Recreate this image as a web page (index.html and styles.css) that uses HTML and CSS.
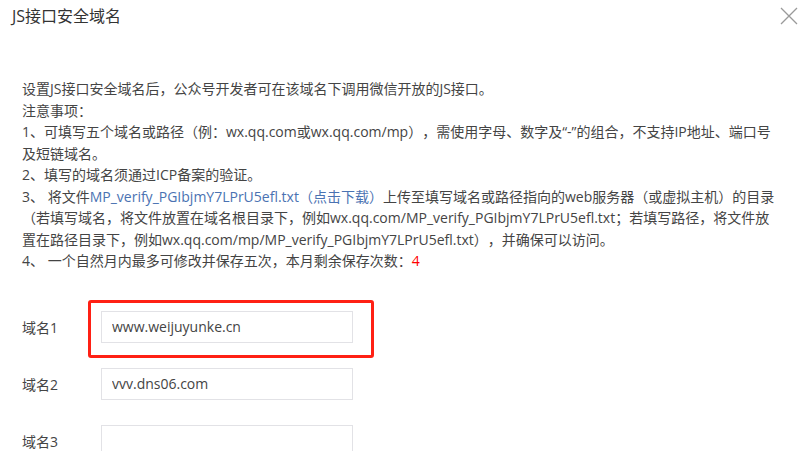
FILE: index.html
```html
<!DOCTYPE html>
<html lang="zh-CN">

<head>
    <meta charset="UTF-8">
    <meta name="viewport" content="width=device-width, initial-scale=1.0">
    <title>JS接口安全域名</title>

    <link rel="stylesheet" href="styles.css">
</head>

<body>
    <div class="dialog">
        <div class="dialog-head">
            <h3 class="dialog-title">JS接口安全域名</h3>
            <span class="dialog-close">
                <svg width="18" height="18" viewBox="0 0 18 18">
                    <path d="M1 1L17 17M17 1L1 17" stroke="#9a9a9a" stroke-width="1.3" fill="none" />
                </svg>
            </span>
        </div>

        <div class="dialog-body">
            <div class="tips">
                <p>设置JS接口安全域名后，公众号开发者可在该域名下调用微信开放的JS接口。</p>
                <p>注意事项：</p>
                <p>1、可填写五个域名或路径（例：wx.qq.com或wx.qq.com/mp），需使用字母、数字及“-”的组合，不支持IP地址、端口号及短链域名。</p>
                <p>2、填写的域名须通过ICP备案的验证。</p>
                <p>3、 将文件<a href="#" class="link">MP_verify_PGIbjmY7LPrU5efl.txt（点击下载）</a>上传至填写域名或路径指向的web服务器（或虚拟主机）的目录（若填写域名，将文件放置在域名根目录下，例如wx.qq.com/MP_verify_PGIbjmY7LPrU5efl.txt；若填写路径，将文件放置在路径目录下，例如wx.qq.com/mp/MP_verify_PGIbjmY7LPrU5efl.txt），并确保可以访问。</p>
                <p>4、 一个自然月内最多可修改并保存五次，本月剩余保存次数：<span class="count">4</span></p>
            </div>

            <form class="domain-form">
                <div class="form-row">
                    <label class="form-label">域名1</label>
                    <div class="form-field">
                        <input type="text" class="form-input" value="www.weijuyunke.cn">
                        <span class="highlight"></span>
                    </div>
                </div>
                <div class="form-row">
                    <label class="form-label">域名2</label>
                    <div class="form-field">
                        <input type="text" class="form-input" value="vvv.dns06.com">
                    </div>
                </div>
                <div class="form-row">
                    <label class="form-label">域名3</label>
                    <div class="form-field">
                        <input type="text" class="form-input" value="">
                    </div>
                </div>
            </form>
        </div>
    </div>
</body>

</html>
```

FILE: styles.css
```css
body {
    margin: 0;
    background-color: #fff;
    font-family: "Open Sans", "Noto Sans CJK SC", sans-serif;
    color: #444;
    text-spacing-trim: space-all;
    overflow: hidden;
}

.dialog {
    width: 800px;
    height: 451px;
}

.dialog-head {
    display: flex;
    justify-content: space-between;
    align-items: flex-start;
    padding: 5px 2px 0 12px;
    height: 78px;
    box-sizing: border-box;
}

.dialog-title {
    margin: 0;
    font-size: 16px;
    font-weight: normal;
    line-height: 22px;
    color: #333;
}

.dialog-close {
    padding-top: 2px;
}

.dialog-body {
    padding: 0 22px;
}

.tips {
    font-size: 14px;
    line-height: 21.5px;
    color: #444;
}

.tips p {
    margin: 0;
}

.link {
    color: #4a72b2;
    text-decoration: none;
}

.count {
    color: #f00;
}

.domain-form {
    margin-top: 39px;
}

.form-row {
    display: flex;
    align-items: center;
    margin-bottom: 25px;
}

.form-label {
    width: 79px;
    font-size: 14px;
    color: #444;
}

.form-field {
    position: relative;
}

.form-input {
    display: block;
    width: 252px;
    height: 32px;
    box-sizing: border-box;
    padding: 0 10px;
    border: 1px solid #e2e2e6;
    font-family: "Open Sans", "Noto Sans CJK SC", sans-serif;
    font-size: 14px;
    color: #444;
    outline: none;
}

.highlight {
    position: absolute;
    left: -13px;
    top: -11px;
    width: 286px;
    height: 58px;
    box-sizing: border-box;
    border: 3px solid #ff2014;
    border-radius: 3px;
}
```
